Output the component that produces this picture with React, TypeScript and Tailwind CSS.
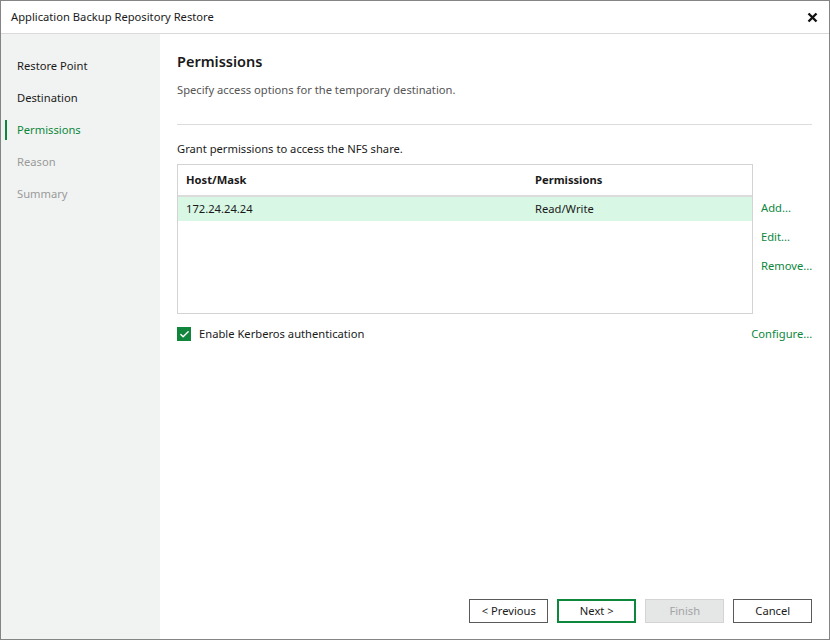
import { Check } from "lucide-react";

const steps = [
  { label: "Restore Point", state: "done" },
  { label: "Destination", state: "done" },
  { label: "Permissions", state: "active" },
  { label: "Reason", state: "todo" },
  { label: "Summary", state: "todo" },
];

function StepItem({ label, state }: { label: string; state: string }) {
  const color =
    state === "active" ? "text-[#0c873c]" : state === "todo" ? "text-[#9a9a9a]" : "text-[#1a1a1a]";
  return (
    <div className="relative h-[32px] flex items-center pl-[16px]">
      {state === "active" && <span className="absolute left-[4px] top-[6px] w-[2px] h-[20px] bg-[#0c873c]" />}
      <span className={color}>{label}</span>
    </div>
  );
}

function Button({ label, variant }: { label: string; variant?: "primary" | "disabled" }) {
  const cls =
    variant === "primary"
      ? "border-2 border-[#0c873c] text-[#1a1a1a]"
      : variant === "disabled"
      ? "border border-[#d4d4d4] bg-[#e5e6e6] text-[#a4a4a4]"
      : "border border-[#5a5a5a] text-[#1a1a1a]";
  return (
    <div className={`w-[79px] h-[24px] flex items-center justify-center ${cls}`}>{label}</div>
  );
}

export default function App() {
  return (
    <div
      className="w-[830px] h-[640px] bg-white border border-[#848484] flex flex-col text-[11.2px] text-[#1a1a1a]"
      style={{ fontFamily: '"Noto Sans", sans-serif' }}
    >
      <div className="h-[33px] shrink-0 flex items-center justify-between pl-[10px] pr-[10px] border-b border-[#dadada]">
        <span>Application Backup Repository Restore</span>
        <svg width="11" height="11" viewBox="0 0 11 11" className="mr-[1px]">
          <path d="M1.5 1.5 L9.5 9.5 M9.5 1.5 L1.5 9.5" stroke="#111" strokeWidth="2.4" />
        </svg>
      </div>

      <div className="flex-1 flex min-h-0">
        <div className="w-[159px] shrink-0 bg-[#f1f3f2] pt-[16px]">
          {steps.map((s) => (
            <StepItem key={s.label} label={s.label} state={s.state} />
          ))}
        </div>

        <div className="flex-1 flex flex-col pl-[17px] pr-[17px]">
          <div className="pt-[17px] text-[14.5px] font-semibold leading-[20px]">Permissions</div>
          <div className="mt-[11px] text-[#555555] leading-[16px]">
            Specify access options for the temporary destination.
          </div>
          <div className="mt-[26px] border-t border-[#dcdcdc]" />

          <div className="mt-[16px] leading-[16px]">Grant permissions to access the NFS share.</div>

          <div className="mt-[7px] flex">
            <div className="w-[576px] h-[150px] border border-[#d3d3d3] flex flex-col">
              <div className="h-[32px] shrink-0 flex items-center font-bold border-b-2 border-[#dcdcdc]">
                <span className="w-[357px] pl-[8px]">Host/Mask</span>
                <span>Permissions</span>
              </div>
              <div className="h-[24px] shrink-0 flex items-center bg-[#d8f7e5]">
                <span className="w-[357px] pl-[8px]">172.24.24.24</span>
                <span>Read/Write</span>
              </div>
            </div>
            <div className="flex flex-col pl-[8px] pt-[36px] gap-[13px] text-[#0c873c] leading-[16px]">
              <span>Add...</span>
              <span>Edit...</span>
              <span>Remove...</span>
            </div>
          </div>

          <div className="mt-[12px] flex items-center justify-between">
            <div className="flex items-center gap-[8px]">
              <span className="w-[14px] h-[14px] bg-[#11853b] flex items-center justify-center">
                <Check className="w-[11px] h-[11px] text-white" strokeWidth={3} />
              </span>
              <span>Enable Kerberos authentication</span>
            </div>
            <span className="text-[#0c873c]">Configure...</span>
          </div>

          <div className="mt-auto mb-[16px] flex justify-end gap-[9px]">
            <Button label="< Previous" />
            <Button label="Next >" variant="primary" />
            <Button label="Finish" variant="disabled" />
            <Button label="Cancel" />
          </div>
        </div>
      </div>
    </div>
  );
}
